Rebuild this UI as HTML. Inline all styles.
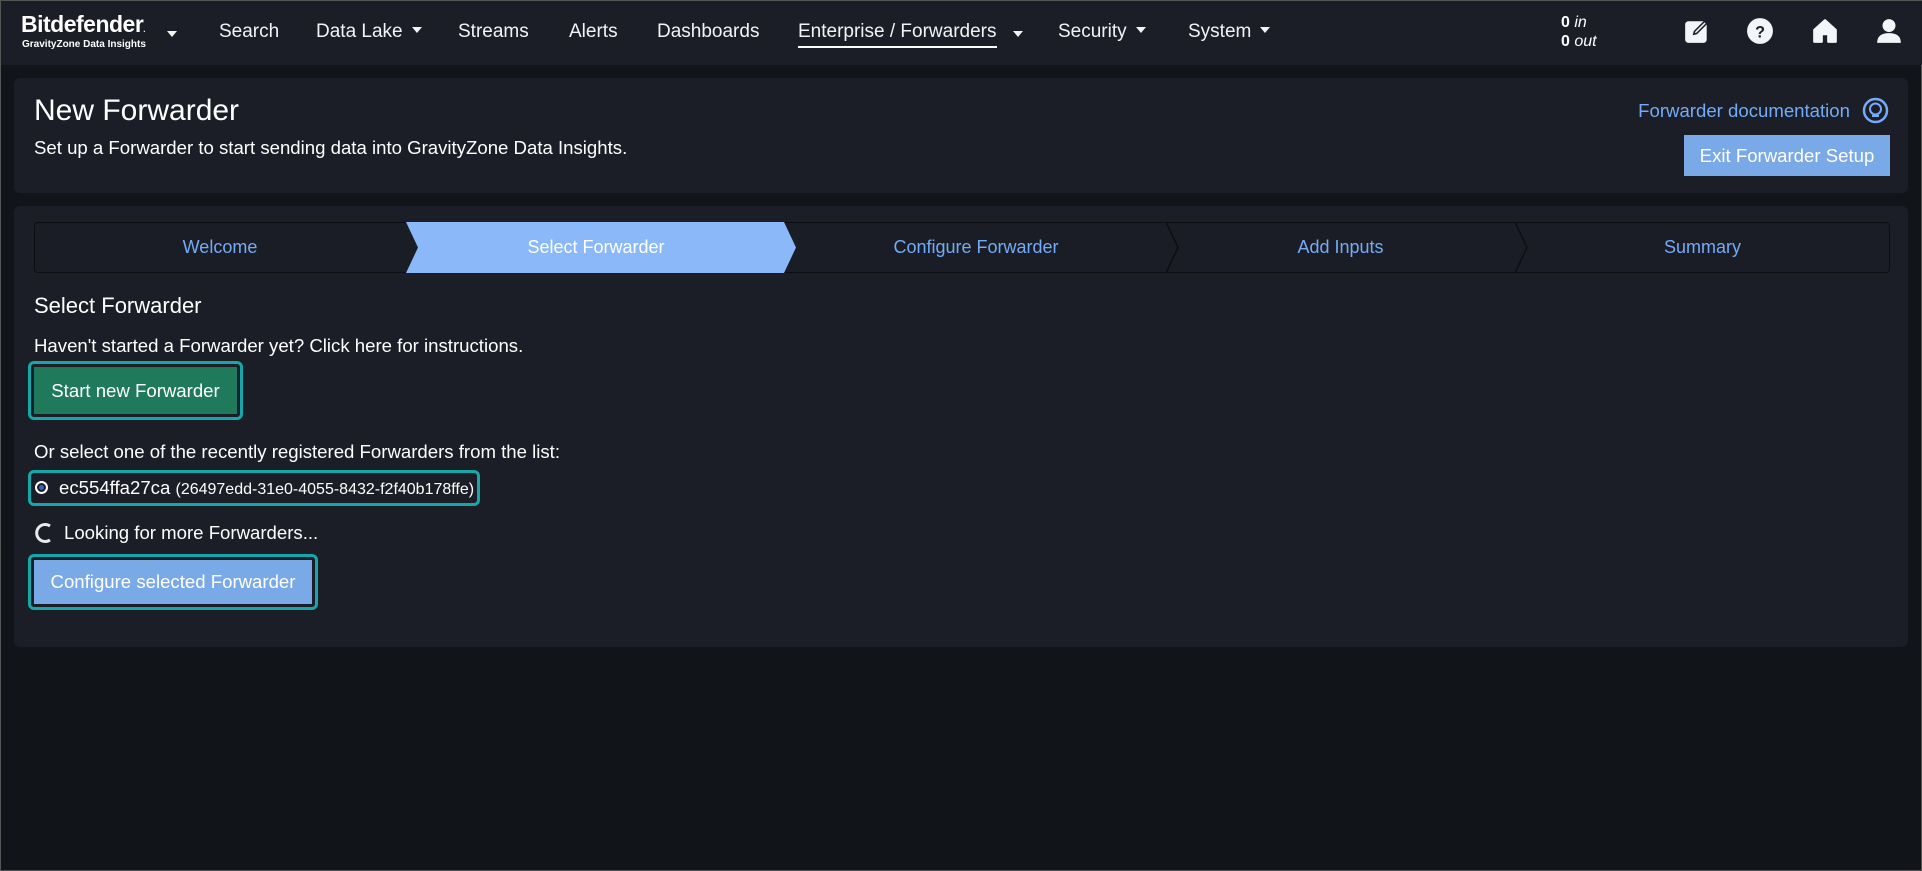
<!DOCTYPE html>
<html><head><style>
*{box-sizing:border-box;margin:0;padding:0}
body{width:1922px;height:871px;background:#111419;font-family:"Liberation Sans",sans-serif;color:#e8eaee;position:relative;overflow:hidden;border:1px solid #555}
.nav{position:absolute;left:0;top:0;width:1922px;height:64px;background:#1b1e26}
.nav .it{position:absolute;top:20px;font-size:19px;color:#f2f3f5}
.car{display:inline-block;width:0;height:0;border-left:5px solid transparent;border-right:5px solid transparent;border-top:6px solid #f2f3f5;margin-left:9px;vertical-align:middle;position:relative;top:-2px}
.panel{position:absolute;left:13px;width:1894px;background:#1b1e26;border-radius:6px}
.abs{position:absolute}
.step{position:absolute;top:221px;height:51px;line-height:51px;text-align:center;font-size:18px;color:#74abf7}
.btnout{position:absolute;border:3px solid #15a8ab;border-radius:6px}
.t{font-size:18.6px}
</style></head><body>
<div class="nav">
  <div class="abs" style="left:20px;top:10px;font-size:23px;font-weight:bold;color:#fff;letter-spacing:-0.5px">Bitdefender<span style="font-size:8px">.</span></div>
  <div class="abs" style="left:21px;top:38px;font-size:10px;font-weight:bold;color:#fff">GravityZone Data Insights</div>
  <span class="car abs" style="left:166px;top:30px;margin:0"></span>
  <div class="it" style="left:218px">Search</div>
  <div class="it" style="left:315px">Data Lake<span class="car"></span></div>
  <div class="it" style="left:457px">Streams</div>
  <div class="it" style="left:568px">Alerts</div>
  <div class="it" style="left:656px">Dashboards</div>
  <div class="it" style="left:797px;border-bottom:2px solid #fff;padding-bottom:3px">Enterprise / Forwarders</div>
  <span class="car abs" style="left:1012px;top:30px;margin:0"></span>
  <div class="it" style="left:1057px">Security<span class="car"></span></div>
  <div class="it" style="left:1187px">System<span class="car"></span></div>
  <div class="abs" style="left:1560px;top:12px;font-size:16px;line-height:19px;color:#fff"><b>0</b> <i>in</i><br><b>0</b> <i>out</i></div>
  <svg class="abs" style="left:1682px;top:16px" width="28" height="28" viewBox="0 0 26 26"><rect x="2" y="4" width="20" height="20" rx="3" fill="#f4f5f8"/><path d="M9 17 L10 13 L20 3 L23 6 L13 16 Z" fill="#1b1e26"/><path d="M11 15 L11.5 13.5 L20 5 L21 6 L12.5 14.5Z" fill="#f4f5f8"/></svg>
  <svg class="abs" style="left:1745px;top:16px" width="28" height="28" viewBox="0 0 26 26"><circle cx="13" cy="13" r="12" fill="#f4f5f8"/><text x="13" y="19" font-size="15" font-weight="bold" text-anchor="middle" fill="#1b1e26" font-family="Liberation Sans">?</text></svg>
  <svg class="abs" style="left:1810px;top:16px" width="28" height="28" viewBox="0 0 26 26"><path d="M3 12 L13 3 L23 12 L23 23 L16 23 L16 16 L10 16 L10 23 L3 23Z" fill="#f4f5f8" stroke="#f4f5f8" stroke-linejoin="round" stroke-width="2"/></svg>
  <svg class="abs" style="left:1874px;top:16px" width="28" height="28" viewBox="0 0 26 26"><circle cx="13" cy="8" r="6" fill="#f4f5f8"/><path d="M2 24 Q2 15 13 15 Q24 15 24 24Z" fill="#f4f5f8"/></svg>
</div>

<div class="panel" style="top:77px;height:115px">
  <div class="abs" style="left:20px;top:16px;font-size:30px;color:#fff">New Forwarder</div>
  <div class="abs t" style="left:20px;top:59px;color:#fff">Set up a Forwarder to start sending data into GravityZone Data Insights.</div>
  <div class="abs t" style="right:58px;top:22px;color:#74abf7">Forwarder documentation</div>
  <svg class="abs" style="right:19px;top:19px" width="27" height="27" viewBox="0 0 27 27"><circle cx="13.5" cy="13.5" r="11.5" fill="none" stroke="#74abf7" stroke-width="2.5"/><circle cx="13.5" cy="12" r="5.5" fill="none" stroke="#74abf7" stroke-width="2"/><path d="M10 19 H17" stroke="#74abf7" stroke-width="2"/></svg>
  <div class="abs" style="left:1670px;top:57px;width:206px;height:41px;background:#7aa9e8;color:#fff;font-size:18.6px;line-height:41px;text-align:center">Exit Forwarder Setup</div>
</div>

<div class="panel" style="top:205px;height:441px"></div>
<div class="abs" style="left:33px;top:221px;width:1856px;height:51px;border:1px solid #0c0e12;border-radius:4px;background:#1a1d25"></div>
<svg class="abs" style="left:33px;top:221px" width="1856" height="51">
  <polygon points="372,0 750,0 762,25.5 750,51 372,51 384,25.5" fill="#8ab8f9"/>
  <polyline points="1132,0 1144,25.5 1132,51" fill="none" stroke="#0c0e12" stroke-width="1.5"/>
  <polyline points="1481,0 1493,25.5 1481,51" fill="none" stroke="#0c0e12" stroke-width="1.5"/>
</svg>
<div class="step" style="left:33px;width:372px">Welcome</div>
<div class="step" style="left:405px;width:380px;color:#fff">Select Forwarder</div>
<div class="step" style="left:785px;width:380px">Configure Forwarder</div>
<div class="step" style="left:1165px;width:349px">Add Inputs</div>
<div class="step" style="left:1514px;width:375px">Summary</div>

<div class="abs" style="left:33px;top:292px;font-size:22px;color:#fff">Select Forwarder</div>
<div class="abs t" style="left:33px;top:334px;color:#fff">Haven't started a Forwarder yet? Click here for instructions.</div>
<div class="btnout" style="left:27px;top:360px;width:215px;height:59px"></div>
<div class="abs" style="left:33px;top:366px;width:203px;height:47px;background:#1f7a5c;color:#fff;font-size:18.6px;line-height:47px;text-align:center">Start new Forwarder</div>
<div class="abs t" style="left:33px;top:440px;color:#fff">Or select one of the recently registered Forwarders from the list:</div>
<div class="btnout" style="left:27px;top:469px;width:452px;height:36px"></div>
<div class="abs" style="left:34px;top:480px;width:13px;height:13px;border-radius:50%;border:2px solid #fff;background:#2c67b8;box-shadow:inset 0 0 0 2px #1b1e26"></div>
<div class="abs t" style="left:58px;top:476px;color:#fff">ec554ffa27ca <span style="font-size:16px">(26497edd-31e0-4055-8432-f2f40b178ffe)</span></div>
<svg class="abs" style="left:33px;top:521px" width="20" height="22" viewBox="0 0 20 22"><path d="M16 4 A8.5 8.5 0 1 0 16 18" fill="none" stroke="#e8eaee" stroke-width="3"/></svg>
<div class="abs t" style="left:63px;top:521px;color:#fff">Looking for more Forwarders...</div>
<div class="btnout" style="left:27px;top:553px;width:290px;height:56px"></div>
<div class="abs" style="left:33px;top:559px;width:278px;height:44px;background:#7aa9e8;color:#fff;font-size:18.6px;line-height:44px;text-align:center">Configure selected Forwarder</div>
</body></html>
